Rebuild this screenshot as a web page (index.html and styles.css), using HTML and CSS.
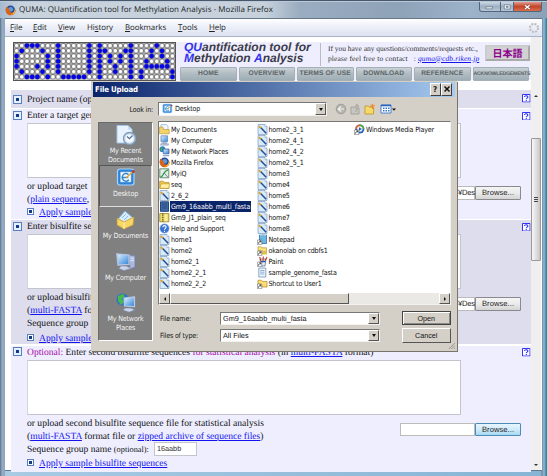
FILE: index.html
```html
<!DOCTYPE html>
<html lang="en">
<head>
<meta charset="utf-8">
<title>QUMA: QUantification tool for Methylation Analysis</title>
<link rel="stylesheet" href="styles.css">
</head>
<body>
<svg class="defs" width="0" height="0">
  <defs>
    <pattern id="cells" width="1" height="1" patternUnits="userSpaceOnUse"><circle cx=".5" cy=".5" r=".44" fill="#fff" stroke="#555" stroke-width=".13"/></pattern>
    <linearGradient id="sky" x2="1" y2="1"><stop stop-color="#e4f6ff"/><stop offset="1" stop-color="#2e7fd8"/></linearGradient>
    <symbol id="i-note" viewBox="0 0 11 11"><path d="M1 .5h7l2 2v8H1z" fill="#d7eafa" stroke="#7d9bc0" stroke-width=".7"/><path d="M8 .5v2h2" fill="#fff" stroke="#7d9bc0" stroke-width=".5"/><path d="M3.6 3.4l5.6 5.8" stroke="#234d94" stroke-width="1.5"/><path d="M1.8 2.2l2 1.8" stroke="#e0a020" stroke-width="1.8"/></symbol>
    <symbol id="i-folder" viewBox="0 0 11 11"><path d="M.7 9.5V2.2h3.6l1 1.2h4.6v6.1z" fill="#f0c750" stroke="#ad842a" stroke-width=".7"/><path d="M1 9.3l1.2-4.4h8.4L9.7 9.3z" fill="#fff0a0" stroke="#b98e2d" stroke-width=".5"/></symbol>
    <symbol id="i-docs" viewBox="0 0 11 11"><path d="M2 .6h5.5l1.5 1.6v6H2z" fill="#eef6ff" stroke="#7f9cc4" stroke-width=".6"/><path d="M.6 3v6.8h9.6V5.6H4.6L3.8 3z" fill="#f4d368" stroke="#b28b30" stroke-width=".6"/></symbol>
    <symbol id="i-pc" viewBox="0 0 11 11"><path d="M2 .8h6.6v6H2z" fill="url(#sky)" stroke="#6c89bd" stroke-width=".8"/><path d="M4 7.2h3l.6 1.4H3.2zM1.6 8.8h7.8v1.5H1.6z" fill="#bfcbe0" stroke="#7788aa" stroke-width=".4"/></symbol>
    <symbol id="i-net" viewBox="0 0 11 11"><circle cx="3.4" cy="3.2" r="2.9" fill="#2c78cf"/><path d="M1.4 1.4l2.4.2-.8 2.2 1 1.6L2 5z" fill="#3db54a"/><path d="M4.2 3h5.8v4.8H4.2z" fill="url(#sky)" stroke="#41639f" stroke-width=".8"/><path d="M3.8 9.2h6.4v1H3.8z" fill="#7e92b8"/></symbol>
    <symbol id="i-fox" viewBox="0 0 11 11"><circle cx="5.5" cy="5.3" r="4.7" fill="#274a9c"/><circle cx="5.8" cy="4.3" r="2.4" fill="#5e9ad8"/><path d="M1.2 1.7C0 5 .6 9.2 4.5 10.2c3.6.8 6.6-2.3 5.9-6.2C9.8 7 8 8 6 7.6c-1.6-.4-1.4-1.8 0-2L3.6 4.7 4 3z" fill="#dc6417"/><path d="M9.3 2.2c1.2 3.3-.6 6.7-3.8 7.1 3.4 1.4 6-2.6 3.8-7.1z" fill="#f7c036"/></symbol>
    <symbol id="i-iq" viewBox="0 0 11 11"><path d="M.8.8h9v9h-9z" fill="#e3eee4" stroke="#4e7560" stroke-width=".8"/><path d="M1.5 9C5 8.4 4 3 9 1.8" fill="none" stroke="#2b9846" stroke-width="1.3"/><path d="M5 4.8l4 4.5" stroke="#6c7b88" stroke-width=".9"/></symbol>
    <symbol id="i-sel" viewBox="0 0 11 11"><path d="M1.5.8h8v9.5h-8z" fill="#416aa5" stroke="#254580"/><path d="M3 3h5M3 5h5M3 7h5" stroke="#1e3d76" stroke-width=".7"/></symbol>
    <symbol id="i-zip" viewBox="0 0 11 11"><path d="M.8 1.6h9v8.2h-9z" fill="#f4e26c" stroke="#8f7a25" stroke-width=".8"/><path d="M3.8 1.6v8" stroke="#43452d" stroke-width="1.3" stroke-dasharray="1 .7"/><path d="M7 2v7.4" stroke="#fff9ce"/></symbol>
    <symbol id="i-help" viewBox="0 0 11 11"><circle cx="5.5" cy="5.5" r="4.8" fill="#3673d2" stroke="#c7daf3" stroke-width=".7"/><path d="M3.9 4.2c0-2.2 3.4-2 3.2 0-.1 1.2-1.6 1.2-1.6 2.6m0 .9v1.2" fill="none" stroke="#fff" stroke-width="1.1"/></symbol>
    <symbol id="cut" viewBox="0 0 11 11"><path d="M.4 6h4.4v4.6H.4z" fill="#fff" stroke="#555" stroke-width=".5"/><path d="M1.4 9.7c0-1.5.8-2 2.3-2M2.5 6.8h1.3v1.5" fill="none" stroke="#111" stroke-width=".7"/></symbol>
    <symbol id="i-pad" viewBox="0 0 11 11"><path d="M2.5 1h7v8.5h-7z" fill="#68b8e5" stroke="#336da7" stroke-width=".8"/><path d="M3 1.2h6" stroke="#dff" stroke-dasharray=".8 .5"/><use href="#cut"/></symbol>
    <symbol id="i-lab" viewBox="0 0 11 11"><path d="M1 5.5V1.8h3l.8 1h4.7v4z" fill="#fae37b" stroke="#ad842a" stroke-width=".6"/><path d="M4 7h6v2.5H4z" fill="#e3c24c"/><use href="#cut"/></symbol>
    <symbol id="i-paint" viewBox="0 0 11 11"><path d="M3 3h6l-1 7H4z" fill="#e8eef8" stroke="#476392" stroke-width=".7"/><path d="M4 5L2.6.8M6 5L6.3.5M8 5l2-4" stroke="#be3b26" stroke-width="1.1"/><path d="M4 5.6h4.4" stroke="#2556b0" stroke-width="1.3"/><use href="#cut"/></symbol>
    <symbol id="i-text" viewBox="0 0 11 11"><path d="M1.8 1h7v9h-7z" fill="#eef5fd" stroke="#6d8fb9" stroke-width=".8"/><path d="M3.2 3.5h4.2M3.2 5.2h4.2M3.2 7h4.2" stroke="#6f8fbc" stroke-width=".7"/></symbol>
    <symbol id="i-short" viewBox="0 0 11 11"><path d="M1 9V2.2h3.4l1 1.2H10V9z" fill="#fbdf6f" stroke="#ad842a" stroke-width=".7"/><use href="#cut"/></symbol>
    <symbol id="i-wmp" viewBox="0 0 11 11"><circle cx="5.8" cy="5" r="4.6" fill="#2667c1"/><path d="M5.8.4a4.6 4.6 0 0 1 4.6 4.6H5.8z" fill="#59a845"/><path d="M5.8.4A4.6 4.6 0 0 0 1.2 5h4.6z" fill="#df6a30"/><circle cx="5.8" cy="5" r="2.7" fill="#e9f1fa"/><path d="M5 3.3l2.8 1.7L5 6.8z" fill="#2860b8"/><use href="#cut"/></symbol>
    <symbol id="i-desk" viewBox="0 0 20 20"><rect x="1.5" y="2" width="16.5" height="16" rx="2.6" fill="#2d82d8" stroke="#a5d5fa" stroke-width="1.2"/><path d="M4.5 5h10.5v10H4.5z" fill="#fafdff" stroke="#9ac6ed" stroke-width=".6"/><path d="M12.5 7.5a3.8 3.8 0 1 0 .4 5.3M7 10.4h5.3" fill="none" stroke="#2f84d6" stroke-width="1.5"/><path d="M10 11l7-6.5" stroke="#e1a63a" stroke-width="1.7"/><circle cx="17.5" cy="4.6" r="1.5" fill="#b63b2b"/></symbol>
    <symbol id="help" viewBox="0 0 9 9"><path d="M.5.5h8v8h-8z" fill="#fff" stroke="#22f"/><path d="M2.6 3.3c0-2 3.7-1.8 3.7 0 0 1.2-1.8 1-1.8 2.3M4.5 6.3v1.1" fill="none" stroke="#22f" stroke-width="1.1"/></symbol>
  </defs>
</svg>

<div class="window">
  <header class="titlebar">
    <svg class="fox"><use href="#i-fox"/></svg>
    <span class="wtitle">QUMA: QUantification tool for Methylation Analysis - Mozilla Firefox</span>
    <div class="wbtns">
      <i class="wb wmin"><svg viewBox="0 0 21 11"><path d="M5.5 6h8v2.3h-8z" fill="#fff" stroke="#4b5968" stroke-width=".7"/></svg></i>
      <i class="wb wmax"><svg viewBox="0 0 13 11"><path d="M3.2 3.5h7v5h-7z" fill="#fff" stroke="#4b5968" stroke-width=".7"/><path d="M5.5 5.2h2.5v1.5H5.5z" fill="#73869c" stroke="#4b5968" stroke-width=".5"/></svg></i>
      <i class="wb wclose"><svg viewBox="0 0 27 11"><path d="M10.5 4l5.6 4.5M16.100 4l-5.600 4.500" stroke="#694039" stroke-width="2.800"/><path d="M10.500 4l5.600 4.500M16.100 4l-5.600 4.500" stroke="#fff" stroke-width="1.700"/></svg></i>
    </div>
  </header>
  <nav class="menubar">
    <span class="m1"><u>F</u>ile</span><span class="m2"><u>E</u>dit</span><span class="m3"><u>V</u>iew</span><span class="m4">Hi<u>s</u>tory</span><span class="m5"><u>B</u>ookmarks</span><span class="m6"><u>T</u>ools</span><span class="m7"><u>H</u>elp</span>
    <svg class="throb" viewBox="0 0 12 12"><circle cx="6" cy="6" r="4" fill="none" stroke="#bbb" stroke-width="2" stroke-dasharray="1.900 1.240"/></svg>
  </nav>
  <div class="view">
    <main class="page">
      <div class="banner">
        <svg class="logo" viewBox="0 0 31 7" preserveAspectRatio="none">
          <path d="M0 0h31v7H0z" fill="#aaa"/><path d="M0 0h31v7H0z" fill="url(#cells)"/>
          <path transform="translate(.5 .5)" fill="none" stroke="#0505e6" stroke-width=".9" stroke-linecap="round" d="M2 0h0M3 0h0M4 0h0M8 0h0M14 0h0M16 0h0M22 0h0M27 0h0M1 1h0M5 1h0M8 1h0M14 1h0M16 1h0M17 1h0M21 1h0M22 1h0M26 1h0M28 1h0M0 2h0M6 2h0M8 2h0M14 2h0M16 2h0M18 2h0M20 2h0M22 2h0M26 2h0M28 2h0M0 3h0M6 3h0M8 3h0M14 3h0M16 3h0M18 3h0M20 3h0M22 3h0M25 3h0M29 3h0M0 4h0M4 4h0M6 4h0M8 4h0M14 4h0M16 4h0M19 4h0M22 4h0M25 4h0M26 4h0M27 4h0M28 4h0M29 4h0M1 5h0M5 5h0M8 5h0M14 5h0M16 5h0M19 5h0M22 5h0M24 5h0M30 5h0M2 6h0M3 6h0M4 6h0M6 6h0M9 6h0M10 6h0M11 6h0M12 6h0M13 6h0M16 6h0M22 6h0M24 6h0M30 6h0"/>
        </svg>
        <div class="bright">
          <div class="btop">
            <h1><b>QU</b>antification tool for<br><b>M</b>ethylation <b>A</b>nalysis</h1>
            <p class="contact">If you have any questions/comments/requests etc.,<br><span class="c2">please feel free to contact&nbsp;&nbsp; : <a>quma@cdb.riken.jp</a></span></p>
            <span class="jp">日本語</span>
          </div>
          <div class="tabs"><span>HOME</span><span>OVERVIEW</span><span>TERMS OF USE</span><span>DOWNLOAD</span><span>REFERENCE</span><span class="ack">ACKNOWLEDGEMENTS</span></div>
        </div>
      </div>

      <section class="row dark r1"><i class="bul"></i><div class="cell"><div class="lab">Project name (optional)</div></div><svg class="q"><use href="#help"/></svg></section>

      <section class="row r2"><i class="bul"></i><div class="cell">
        <div class="lab">Enter a target genome sequence</div><div class="ta"></div>
        <div class="up"><div class="lines"><div>or upload target</div><div>(<a>plain sequence</a>,</div><div><i class="sb"></i><a>Apply sample</a></div></div>
        <div class="file"><span class="fin">¥Des</span><span class="br">Browse...</span></div></div>
      </div><svg class="q"><use href="#help"/></svg></section>

      <section class="row dark r3"><i class="bul"></i><div class="cell">
        <div class="lab">Enter bisulfite sequences</div><div class="ta"></div>
        <div class="up"><div class="lines"><div>or upload bisulfite</div><div>(<a>multi-FASTA</a> format</div><div>Sequence group</div><div class="last"><i class="sb"></i><a>Apply sample</a></div></div>
        <div class="file"><span class="fin">¥Des</span><span class="br">Browse...</span></div></div>
      </div><svg class="q"><use href="#help"/></svg></section>

      <section class="row r4"><i class="bul"></i><div class="cell">
        <div class="lab"><em>Optional:</em> Enter second bisulfite sequences <em>for statistical analysis</em> (in <a>multi-FASTA</a> format)</div><div class="ta"></div>
        <div class="up"><div class="lines"><div>or upload second bisulfite sequence file for statistical analysis</div><div>(<a>multi-FASTA</a> format file or <a>zipped archive of sequence files</a>)</div><div class="grp">Sequence group name <small>(optional):</small><span class="gin">16aabb</span></div><div class="last"><i class="sb"></i><a>Apply sample bisulfite sequences</a></div></div>
        <div class="file"><span class="fin"></span><span class="br hot">Browse...</span></div></div>
      </div><svg class="q"><use href="#help"/></svg></section>
    </main>
    <div class="vbar"><i class="up-a"></i><i class="thumb"></i><i class="dn-a"></i></div>
  </div>
</div>

<div class="dialog">
  <div class="dtitle"><span>File Upload</span><i class="db q1">?</i><i class="db"><svg viewBox="0 0 8 8"><path d="M1.500 1.500l5 5M6.500 1.500l-5 5" stroke="#111" stroke-width="1.500"/></svg></i></div>
  <div class="dbody">
    <div class="left">
      <div class="look">Look in:</div>
      <div class="places">
        <div class="pl p1"><svg viewBox="0 0 20 20"><path d="M1 .5h11l4 4V18H1z" fill="#e8f3fd" stroke="#a6c4e5"/><path d="M12 .5v4h4" fill="#bfdaf5"/><circle cx="13.500" cy="13.500" r="6" fill="#cfe2f3" stroke="#7f9fbe" stroke-width="1.400"/><circle cx="13.500" cy="13.500" r="3.800" fill="#f8fcff"/><path d="M11 11.500l2.500 2.200 3-3.200" fill="none" stroke="#536f96" stroke-width="1.200"/></svg><span>My Recent</span><span class="l2">Documents</span></div>
        <div class="pl p2"><svg><use href="#i-desk"/></svg><span>Desktop</span></div>
        <div class="pl p3"><svg viewBox="0 0 20 20"><path d="M2 9l7-8 8 7-5 8z" fill="#d7effd" stroke="#7aaed9"/><path d="M6 8l4-4M8 10l4-4" stroke="#8fbbe0"/><path d="M1 8l7 4 10-5-1 8-9 4-7-4z" fill="#f6d766" stroke="#c49836" stroke-width=".8"/><path d="M8 12v7" stroke="#fff3b3"/></svg><span>My Documents</span></div>
        <div class="pl p4"><svg viewBox="0 0 20 20"><path d="M13 3l6 .8V15l-5 2z" fill="#a9b8dc" stroke="#6d7fae" stroke-width=".7"/><path d="M14.500 6l3.500.5M14.500 8.500l3.500.3" stroke="#e4ebfa"/><path d="M.8 1.800L13 3v9.500L2 13z" fill="url(#sky)" stroke="#b5c5e5" stroke-width="1.300"/><path d="M5 14h5l5 2.500-7 2-5-2z" fill="#cbd5e9" stroke="#7f90b5" stroke-width=".6"/></svg><span>My Computer</span></div>
        <div class="pl p5"><svg viewBox="0 0 20 20"><circle cx="6.500" cy="6.500" r="6" fill="#2c6fc8"/><path d="M2 3l5-2 2 2-3 3 2 3-3 3-3-4z" fill="#46ba4d"/><path d="M8 5l10.500-1v9.500L8.500 13z" fill="url(#sky)" stroke="#b7cbe8" stroke-width="1.200"/><path d="M9 15h6l4 2-6 2.200-6-2z" fill="#cbd5e9" stroke="#7184ac" stroke-width=".6"/></svg><span>My Network</span><span class="l2">Places</span></div>
      </div>
    </div>
    <div class="right">
      <div class="tools">
        <div class="combo desk"><svg><use href="#i-desk"/></svg><span>Desktop</span><i class="dd"></i></div>
        <svg class="tb" viewBox="0 0 62 12"><circle cx="6" cy="6" r="4.800" fill="#b8b6b0" stroke="#96948e" stroke-width=".8"/><path d="M9 6H3.500M6 3.300L3.300 6 6 8.700" fill="none" stroke="#f5f4f0" stroke-width="1.200"/><path d="M16 4h3l1 1h4v6h-8z" fill="#c8c6c0" stroke="#94928c" stroke-width=".7"/><path d="M20 8.500c2.500 0 2-3 2-5.500M20 4l2-2.500L24 4" fill="none" stroke="#aaa8a2" stroke-width="1.100"/><path d="M30 3h3.500l1 1.200h4V11H30z" fill="#f8d965" stroke="#b58b2a" stroke-width=".7"/><path d="M35 3.500l5-1M37.500.8v5M35.800 1.500l3.500 3.700" stroke="#ee8a25" stroke-width="1"/><path d="M46 2h10v8H46z" fill="#fff" stroke="#2964c0" stroke-width=".8"/><path d="M46 2.500h10" stroke="#2964c0" stroke-width="1.600"/><path d="M48 5.300h6.500M48 7.800h6.500" stroke="#3676ce" stroke-width="1.400" stroke-dasharray="1.500 1"/><path d="M57 5.500h4l-2 2.200z" fill="#111"/></svg>
      </div>
      <div class="list">
        <ul>
          <li><svg><use href="#i-docs"/></svg><span>My Documents</span></li><li><svg><use href="#i-pc"/></svg><span>My Computer</span></li><li><svg><use href="#i-net"/></svg><span>My Network Places</span></li><li><svg><use href="#i-fox"/></svg><span>Mozilla Firefox</span></li><li><svg><use href="#i-iq"/></svg><span>MyiQ</span></li><li><svg><use href="#i-folder"/></svg><span>seq</span></li><li><svg><use href="#i-note"/></svg><span>2_6_2</span></li><li class="sel"><svg><use href="#i-sel"/></svg><span>Gm9_16aabb_multi_fasta</span></li><li><svg><use href="#i-zip"/></svg><span>Gm9_J1_plain_seq</span></li><li><svg><use href="#i-help"/></svg><span>Help and Support</span></li><li><svg><use href="#i-note"/></svg><span>home1</span></li><li><svg><use href="#i-note"/></svg><span>home2</span></li><li><svg><use href="#i-note"/></svg><span>home2_1</span></li><li><svg><use href="#i-note"/></svg><span>home2_2_1</span></li><li><svg><use href="#i-note"/></svg><span>home2_2_2</span></li>
          <li><svg><use href="#i-note"/></svg><span>home2_3_1</span></li><li><svg><use href="#i-note"/></svg><span>home2_4_1</span></li><li><svg><use href="#i-note"/></svg><span>home2_4_2</span></li><li><svg><use href="#i-note"/></svg><span>home2_5_1</span></li><li><svg><use href="#i-note"/></svg><span>home3</span></li><li><svg><use href="#i-note"/></svg><span>home4</span></li><li><svg><use href="#i-note"/></svg><span>home5</span></li><li><svg><use href="#i-note"/></svg><span>home6</span></li><li><svg><use href="#i-note"/></svg><span>home7</span></li><li><svg><use href="#i-note"/></svg><span>home8</span></li><li><svg><use href="#i-pad"/></svg><span>Notepad</span></li><li><svg><use href="#i-lab"/></svg><span>okanolab on cdbfs1</span></li><li><svg><use href="#i-paint"/></svg><span>Paint</span></li><li><svg><use href="#i-text"/></svg><span>sample_genome_fasta</span></li><li><svg><use href="#i-short"/></svg><span>Shortcut to User1</span></li>
          <li><svg><use href="#i-wmp"/></svg><span>Windows Media Player</span></li>
        </ul>
        <div class="hbar"><i class="hb"><b class="la"></b></i><i class="hthumb"></i><i class="htrack"></i><i class="hb"><b class="ra"></b></i></div>
      </div>
      <div class="form">
        <label>File name:</label><div class="combo"><span>Gm9_16aabb_multi_fasta</span><i class="dd"></i></div><button class="def">Open</button>
        <label>Files of type:</label><div class="combo"><span>All Files</span><i class="dd"></i></div><button>Cancel</button>
      </div>
    </div>
  </div>
  <svg class="grip" viewBox="0 0 8 8"><path d="M1 8l7-7M4 8l4-4M7 8l1-1" stroke="#8a877f" stroke-width=".9"/></svg>
</div>
</body>
</html>
```
FILE: styles.css
```css
* { box-sizing: border-box; }
html, body { margin: 0; height: 100%; overflow: hidden; }
body { position: relative; width: 547px; height: 476px; font: 9.57px/13px "Liberation Serif", serif; color: #111; text-rendering: geometricPrecision; }
svg { display: block; flex: none; }
.defs { position: absolute; }
i { font-style: normal; display: block; flex: none; }
a { color: #1414f0; text-decoration: underline; }

.window { height: 476px; padding: 0 5px 5px; display: flex; flex-direction: column; border-top: 1px solid #48586a;
  background: linear-gradient(90deg, #5c6f82 0, #93adc6 2px, #8ea5bf 5px, transparent 5px, transparent 541px, #68798b 542px, #8fb1cd 543px, #7fa6c6 545px, #1d8fa8 546px), linear-gradient(90deg, #a9cbe4, #86b4d4); }
.titlebar { height: 17px; margin: 0 -5px; padding-left: 5px; display: flex; align-items: center; flex: none;
  background: linear-gradient(90deg, #a6bace 0, #c9d3de 20px, #c6d1dc 265px, #9aacc0 300px, #8ea2b8 400px, #9db3c9 470px, #8ba1b8 547px); border-top: 1px solid #b9c9d9; }
.fox { width: 11px; height: 11px; }
.wtitle { font: 8px/12px "Open Sans", sans-serif; margin-left: 3px; width: 450px; margin-right: 6px; letter-spacing: .04px; white-space: nowrap; color: #1a1f26; }
.wbtns { display: flex; align-self: flex-start; height: 10px; margin-left: 4px; }
.wb { border: 1px solid #53657a; border-top: 0; background: linear-gradient(#cbd8e5, #9eb0c4 50%, #b5c6d8); }
.wb svg { width: 100%; height: 100%; }
.wmin { width: 22px; border-radius: 0 0 0 3px; }
.wmax { width: 13px; border-left: 0; }
.wclose { width: 28px; border-left: 0; border-radius: 0 0 3px 0; background: linear-gradient(#df9c8b, #c3452a 50%, #d96e4c); }

.menubar { height: 19px; flex: none; display: flex; align-items: center; width: 537px; padding-left: 5px; border-top: 1px solid #65788b; border-bottom: 1px solid #aab2c4;
  background: linear-gradient(#fff, #eef1f9 40%, #dde2f1); font: 7.9px/12px "Open Sans", sans-serif; color: #222; }
.menubar span { white-space: nowrap; letter-spacing: -.05px; }
.m1 { width: 23px; } .m2 { width: 25px; } .m3 { width: 29px; } .m4 { width: 38px; } .m5 { width: 53px; } .m6 { width: 31px; } .m7 { width: 50px; }
.throb { width: 12px; height: 12px; margin-left: auto; margin-right: 2px; }

.view { flex: 1; display: flex; width: 537px; background: #fff; min-height: 0; border-bottom: 1px solid #66788c; }
.page { width: 526px; padding: 5px 0 0 6px; }
.banner { display: flex; margin: 0 0 10.400px 2px; height: 38px; width: 520px; }
.logo { width: 163px; height: 38.500px; border: 1px solid #555; }
.bright { flex: 1; background: #eef; padding-left: 4px; }
.btop { display: flex; height: 24.500px; }
h1 { margin: 0; width: 140px; padding: 0 0 0 4px; font: italic bold 12px/11px "Liberation Sans", sans-serif; color: #3b3b48; white-space: nowrap; }
h1 b { color: #3434e8; }
.contact { margin: 1px 0 1px; border-left: 1px solid #bbb; padding: 1px 0 0 7px; width: 165px; font-size: 7.450px; line-height: 9.500px; color: #333; white-space: nowrap; }
.c2 { letter-spacing: .14px; }
.contact a { font-style: italic; }
.jp { height: 16px; width: 45px; margin-top: 3px; border: 2px solid #bbb; border-color: #ccc #aaa #aaa #ccc; background: #d2d2d4; color: #8b008b; font: bold 10px/12px "Noto Sans CJK JP", sans-serif; text-align: center; }
.tabs { display: flex; gap: 2px; height: 14px; }
.tabs span { width: 56.500px; flex: none; border: 1px solid #a5b0b6; border-radius: 1px; background: linear-gradient(#c9d1d5, #afbbc1 50%, #9faeb6); font: bold 6.700px/12px "Liberation Sans", sans-serif; color: #5c6366; text-align: center; white-space: nowrap; letter-spacing: .1px; }
.tabs .ack { font-size: 5.200px; letter-spacing: -.2px; }

.row { display: flex; background: #eef; width: 520px; overflow: hidden; }
.dark { background: #dde; }
.r1 { height: 17.500px; margin-bottom: 1.300px; padding-top: 2.800px; }
.r2 { height: 110px; margin-bottom: 1.300px; }
.r3 { height: 124px; margin-bottom: 1.300px; }
.r4 { height: 126px; }
.bul { width: 9px; height: 9px; margin: 1.500px 5px 0 2px; border: 1px solid #5a7fbe; background: linear-gradient(#123a86, #123a86) center / 3px 3px no-repeat, #e4efff; }
.cell { width: 495px; flex: none; }
.lab { height: 14px; white-space: nowrap; }
.lab em { font-style: normal; color: #a60ba6; }
.ta { width: 434px; height: 55px; background: #fff; border: 1px solid #c4c4cc; border-left-color: #d5d5e2; }
.up { display: flex; justify-content: space-between; padding-top: 2px; width: 494px; }
.lines { white-space: nowrap; }
.lines > div { height: 13px; }
.lines .last { margin-top: 1.500px; }
.sb { display: inline-block; width: 7px; height: 7px; margin-right: 5px; border: 1px solid #5a7fbe; background: linear-gradient(#123a86, #123a86) center / 3px 3px no-repeat, #fff; }
.lines .grp { display: flex; }
.grp small { font-size: 8.300px; margin-left: 2.400px; }
.gin { height: 14px; width: 43px; margin: -.5px 0 0 5px; background: #fff; border: 1px solid #c4c4cc; padding-left: 2px; font: 7.300px/11px "Liberation Sans", sans-serif; color: #333; }
.file { display: flex; margin-top: 6px; height: 13.500px; font: 7.600px/11.500px "Liberation Sans", sans-serif; color: #222; }
.fin { width: 75px; background: #fff; border: 1px solid #bbb; padding-left: 57px; letter-spacing: -.2px; white-space: nowrap; }
.br { width: 46px; border: 1px solid #8a8a8e; border-radius: 1px; background: linear-gradient(#f4f4f4, #ebebeb 50%, #d3d3d3); text-align: center; letter-spacing: .05px; }
.hot { border-color: #4c8cb5; background: linear-gradient(#e8f6fd, #cfeafa 50%, #a5d8f3); }
.q { width: 8.500px; height: 8.500px; margin: 2.500px 0 0 0; }
.r1 .q { margin-top: 1px; }

.vbar { width: 10px; background: #efefef; display: flex; flex-direction: column; align-items: center; padding-top: 58px; }
.up-a { border: 2px solid transparent; border-top: 0; border-bottom: 2.500px solid #333; }
.dn-a { border: 2px solid transparent; border-bottom: 0; border-top: 2.500px solid #333; margin-top: auto; margin-bottom: 4px; }
.thumb { width: 10px; height: 123px; margin-top: 41px; border: 1px solid #999; border-radius: 1px; background: linear-gradient(#444 1px, transparent 1px 2px, #444 2px 3px, transparent 3px 4px, #444 4px) center / 4px 5px no-repeat, linear-gradient(90deg, #f6f6f6, #dcdcdc 60%, #c6c6c6); }

.dialog { position: absolute; left: 91px; top: 81px; width: 366px; height: 270px; background: #d4d0c8; border: 2px solid #d4d0c8; border-top-width: 1px; box-shadow: 1px 1px 0 #77746e;
  font: 7.100px/11px "DejaVu Sans Condensed", "DejaVu Sans", sans-serif; letter-spacing: -.18px; color: #111; }
.dtitle { height: 15px; display: flex; align-items: center; padding: 0 3px 0 2px; background: linear-gradient(90deg, #0a246a, #a6caf0); color: #fff; font-weight: bold; }
.dtitle span { flex: 1; font-size: 7.800px; letter-spacing: -.15px; }
.db { width: 11px; height: 12.500px; margin-left: .5px; background: #d4d0c8; border: 1px solid; border-color: #fff #404040 #404040 #fff; color: #111; text-align: center; }
.db svg { width: 8px; height: 8px; margin: 1px auto; }
.q1 { font-size: 8px; }
.dbody { display: flex; padding-left: 5px; }
.left { width: 55px; margin-right: 5px; }
.look { height: 25px; line-height: 26px; text-align: right; }
.places { height: 219px; background: #808080; border: 1px solid; border-color: #6b6b6b #fff #fff #6b6b6b; color: #f4f4f4; text-align: center; line-height: 8.500px; }
.pl svg { width: 20px; height: 20px; margin: 0 auto; }
.pl span { display: block; white-space: nowrap; }
.p1 { height: 42px; padding-top: 2px; } .p1 span { padding-top: 2px; }
.p2 { height: 42px; background: #8b8b8b; border: 1px solid; border-color: #555 #ddd #ddd #555; padding-top: 1px; } .p2 span { padding-top: 3px; }
.p3 { height: 44px; padding-top: 3px; } .p3 span, .p4 span, .p5 span { padding-top: 2px; }
.p4 { height: 41px; padding-top: 1px; }
.p5 { padding-top: 1px; }
.pl .l2 { padding-top: .2px; }
.right { width: 293px; }
.tools { height: 24px; display: flex; align-items: center; gap: 8px; }
.combo { display: flex; align-items: stretch; background: #fff; border: 1px solid; border-color: #777 #f4f2ee #f4f2ee #777; }
.combo span { flex: 1; padding-left: 2px; }
.desk { width: 169px; height: 13.500px; }
.desk svg { width: 11px; height: 11px; margin: 0 0 0 3px; }
.tb { width: 62px; height: 12px; }
.dd { width: 11px; background: #d4d0c8; border: 1px solid; border-color: #fff #555 #555 #fff; display: flex; align-items: center; justify-content: center; }
.dd::after { content: ""; border: 2.500px solid transparent; border-top: 3px solid #111; border-bottom: 0; }
.list { height: 184px; background: #fff; border: 1px solid; border-color: #777 #f4f2ee #f4f2ee #777; display: flex; flex-direction: column; justify-content: space-between; }
.list ul { list-style: none; margin: 0; padding: 1.500px 0 0 0; display: grid; grid-template-rows: repeat(15, 11.050px); grid-auto-flow: column; grid-auto-columns: 97.500px; }
.list li { display: flex; white-space: nowrap; }
.list li svg { width: 11px; height: 11px; }
.list li span { padding: 0 1px; }
.list .sel span { background: #0a246a; color: #fff; letter-spacing: -.08px; }
.hbar { display: flex; height: 11px; }
.hb { width: 11px; background: #d4d0c8; border: 1px solid; border-color: #fff #555 #555 #fff; display: flex; align-items: center; justify-content: center; }
.la { border: 2px solid transparent; border-right: 2.500px solid #111; border-left: 0; }
.ra { border: 2px solid transparent; border-left: 2.500px solid #111; border-right: 0; }
.hthumb { width: 179px; background: #d4d0c8; border: 1px solid; border-color: #fff #555 #555 #fff; }
.htrack { flex: 1; background: #ebe9e5; }
.form { margin-top: 6px; display: grid; grid-template-columns: 62px 160px 71px; grid-template-rows: 14px 14px; row-gap: 3.500px; align-items: center; }
.form label { padding-left: 2px; white-space: nowrap; }
.form .combo { height: 13px; font: 7.300px/11px "Liberation Sans", sans-serif; letter-spacing: 0; }
button { margin: 0 0 0 21.500px; width: 49.500px; height: 14.500px; padding: 0; background: #d4d0c8; border: 1px solid; border-color: #fff #555 #555 #fff; font: 7.200px/11px "Liberation Sans", sans-serif; letter-spacing: 0; color: #111; text-align: center; }
.def { border-color: #444; box-shadow: inset 1px 1px #fff, inset -1px -1px #888; }
.grip { position: absolute; right: 0; bottom: 0; width: 7px; height: 7px; }
```
